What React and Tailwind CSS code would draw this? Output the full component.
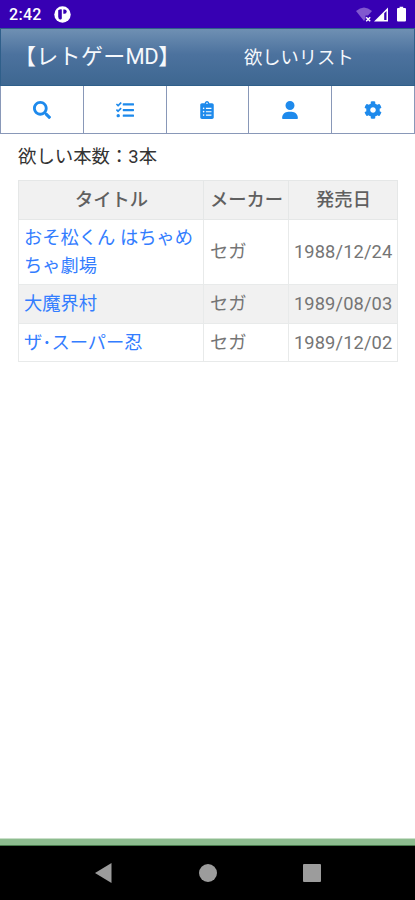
import { FaSearch, FaTasks, FaClipboardList, FaCog } from "react-icons/fa";
import { FaUser } from "react-icons/fa6";

const tabs = [
  { id: "search", Icon: FaSearch },
  { id: "checks", Icon: FaTasks },
  { id: "clipboard", Icon: FaClipboardList },
  { id: "user", Icon: FaUser },
  { id: "settings", Icon: FaCog },
];

const games = [
  { title: "おそ松くん はちゃめちゃ劇場", maker: "セガ", date: "1988/12/24", row: "h-[65px]" },
  { title: "大魔界村", maker: "セガ", date: "1989/08/03", row: "h-[39px] bg-[#f1f1f1]" },
  { title: "ザ･スーパー忍", maker: "セガ", date: "1989/12/02", row: "h-[38px]" },
];

function StatusBar() {
  return (
    <div className="flex h-[28px] shrink-0 items-center bg-[#3700b3] pl-[9px] pr-[8px] pt-[1px] text-white">
      <span className="w-[45px] text-[16px] font-medium leading-none tracking-[0.3px]">2:42</span>
      <svg width="17" height="17" viewBox="0 0 17 17">
        <circle cx="8.5" cy="8.5" r="8.2" fill="#fff" />
        <path d="M4.2 4.2q2.6-1.4 3.6-.6v8.8q-.8 1.4-2 1.2-1.6-1-1.6-3.2z" fill="#3700b3" />
        <path d="M9.3 3.4h1.2a2.2 2.2 0 0 1 0 4.4H9.3z" fill="#3700b3" />
      </svg>
      <svg className="ml-auto" width="52" height="17" viewBox="0 0 52 17">
        <path d="M1 5Q9-2 17 5L13 9.5H10.5V13L9 15z" fill="#8158cf" />
        <path d="M11.2 11.3l4 4m0-4l-4 4" stroke="#fff" strokeWidth="1.5" />
        <path d="M19 15.5L33 1.5v14z" fill="#fff" />
        <path d="M29.2 7.2l2.3-2.3v9.2h-2.3z" fill="#3700b3" />
        <path d="M43 2h1.6V.8h3.6V2H50q1 0 1 1v11.5q0 1-1 1h-7q-1 0-1-1V3q0-1 1-1z" fill="#fff" />
      </svg>
    </div>
  );
}

function Header() {
  return (
    <header className="flex h-[58px] shrink-0 items-center border border-[#2f5f8a] bg-linear-to-b from-[#6f90b3] via-[#4c729e] via-45% to-[#3e6791] text-[#f5f8fc]">
      <h1 className="ml-[13px] w-[230px] whitespace-nowrap text-[22px] leading-none tracking-[0.3px]">
        【レトゲー<span className="tracking-[-0.5px]">MD</span>】
      </h1>
      <span className="whitespace-nowrap pt-[3px] text-[18.3px] leading-none">欲しいリスト</span>
    </header>
  );
}

function Tabs() {
  return (
    <nav className="grid h-[48px] shrink-0 grid-cols-5 border-b border-l border-[#8998b8]">
      {tabs.map(({ id, Icon }) => (
        <div key={id} className="flex items-center justify-center border-r border-[#8998b8] text-[#1e8aec]">
          <Icon size={18} />
        </div>
      ))}
    </nav>
  );
}

function GameTable() {
  return (
    <table className="ml-[18px] mt-[9px] w-[379px] table-fixed border-collapse text-[18.3px] leading-[28px] text-[#757575] [&_td]:border [&_td]:border-[#e8eaea] [&_td]:p-0 [&_th]:border [&_th]:border-[#e5e7e7] [&_th]:p-0 [&_th]:pl-px">
      <colgroup>
        <col className="w-[185px]" />
        <col className="w-[85px]" />
        <col className="w-[109px]" />
      </colgroup>
      <thead>
        <tr className="h-[39px] bg-[#f1f1f1] text-[#606060] [&>th]:font-medium">
          <th>タイトル</th>
          <th>メーカー</th>
          <th>発売日</th>
        </tr>
      </thead>
      <tbody>
        {games.map((g) => (
          <tr key={g.date} className={g.row}>
            <td><div className="pl-[5px] text-[#337dff]">{g.title}</div></td>
            <td><div className="pl-[6px]">{g.maker}</div></td>
            <td><div className="whitespace-nowrap pl-[5px] tracking-[0.1px]">{g.date}</div></td>
          </tr>
        ))}
      </tbody>
    </table>
  );
}

function NavigationBar() {
  return (
    <footer className="flex h-[54px] shrink-0 items-center justify-between bg-black pl-[95px] pr-[94px]">
      <svg width="17" height="20" viewBox="0 0 17 20"><path d="M0 10L16.5 0v20z" fill="#9c9c9c" /></svg>
      <div className="size-[18px] rounded-full bg-[#9c9c9c]" />
      <div className="size-[18px] rounded-[1px] bg-[#9c9c9c]" />
    </footer>
  );
}

export default function App() {
  return (
    <div className="flex h-[900px] w-[415px] flex-col overflow-hidden bg-white font-[Roboto,'Noto_Sans_CJK_JP',sans-serif]">
      <StatusBar />
      <Header />
      <Tabs />
      <main className="flex-1">
        <p className="ml-[18px] mt-[9px] text-[18.4px] leading-[28px] text-[#333]">欲しい本数：3本</p>
        <GameTable />
      </main>
      <div className="h-[8px] shrink-0 border-b border-t border-b-[#477a4b] border-t-[#c9dfc9] bg-[#8dbc8f]" />
      <NavigationBar />
    </div>
  );
}
